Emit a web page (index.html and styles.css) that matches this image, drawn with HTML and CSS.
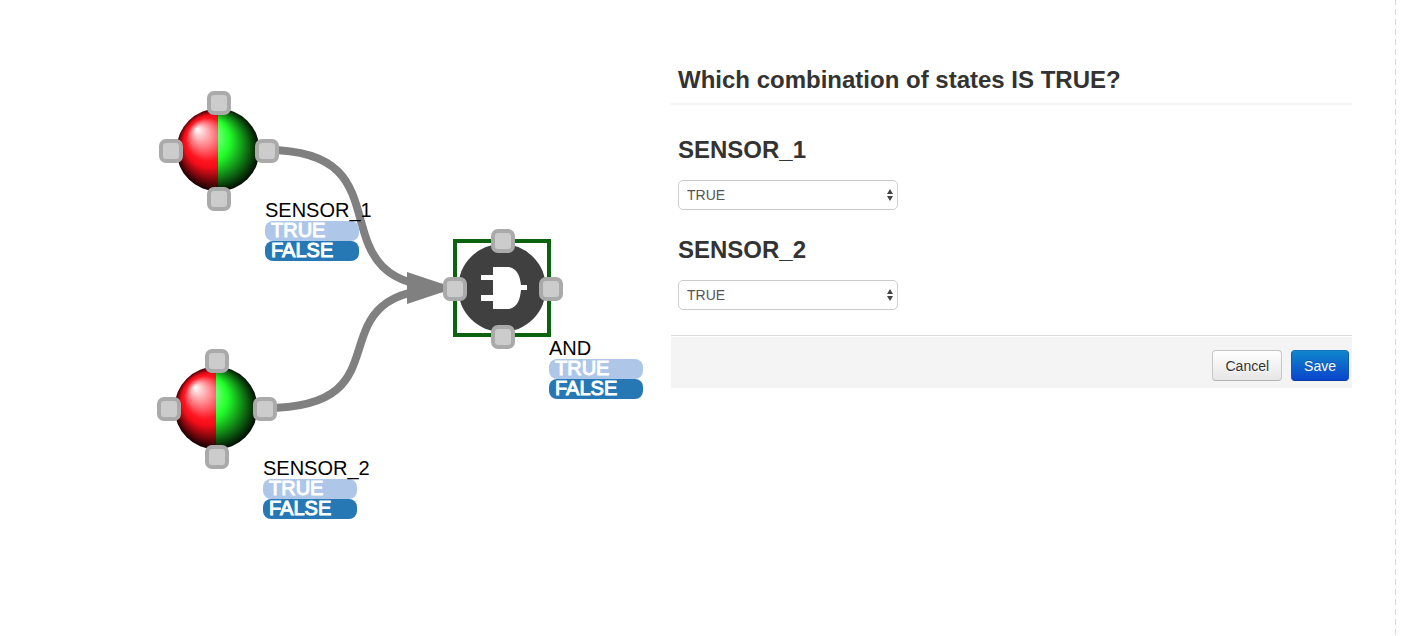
FILE: index.html
```html
<!DOCTYPE html>
<html lang="en">
<head>
<meta charset="utf-8">
<title>Logic gate states</title>
<link rel="stylesheet" href="styles.css">
</head>
<body>
<div class="page">
  <svg class="diagram" width="671" height="560" viewBox="0 0 671 560" role="img" aria-label="Two sensors feeding an AND gate">
    <defs>
      <radialGradient id="red-ball" gradientUnits="userSpaceOnUse" cx="0" cy="0" r="43" fx="-21" fy="-21">
        <stop offset="0" stop-color="#fff"/>
        <stop offset="0.5" stop-color="#ff1420"/>
        <stop offset="0.6" stop-color="#f30d18"/>
        <stop offset="1" stop-color="#000"/>
      </radialGradient>
      <radialGradient id="green-ball" gradientUnits="userSpaceOnUse" cx="0" cy="0" r="43" fx="-21" fy="-21">
        <stop offset="0" stop-color="#fff"/>
        <stop offset="0.5" stop-color="#24ff2c"/>
        <stop offset="0.54" stop-color="#20f028"/>
        <stop offset="1" stop-color="#000"/>
      </radialGradient>
      <rect id="port" class="port" x="-10" y="-10" width="20" height="20" rx="5"/>
      <g id="sensor">
        <path d="M0-41.500A41.500 41.500 0 0 0 0 41.500Z" fill="url(#red-ball)"/>
        <path d="M0-41.500A41.500 41.500 0 0 1 0 41.500Z" fill="url(#green-ball)"/>
        <use href="#port" x="1" y="-47"/>
        <use href="#port" x="-47" y="1"/>
        <use href="#port" x="49" y="1"/>
        <use href="#port" x="1" y="49"/>
      </g>
      <g id="states">
        <rect class="state-true" y="4" width="94" height="20" rx="8"/>
        <rect class="state-false" y="24" width="94" height="20" rx="8"/>
        <text class="state-text" x="6" y="20">TRUE</text>
        <text class="state-text" x="6" y="40">FALSE</text>
      </g>
    </defs>

    <path class="link" d="M267 150C416 150 305 288 453 288"/>
    <path class="link" d="M265 408C416 408 303 288 453 288"/>
    <path class="arrow" d="M407 272L455 288L407 304Z"/>

    <use href="#sensor" x="218" y="150"/>
    <use href="#sensor" x="216" y="408"/>

    <g>
      <rect class="selection" x="455" y="241" width="94" height="94"/>
      <circle class="gate" cx="502" cy="288" r="44"/>
      <path class="gate-glyph" d="M493 267H509C518 269 520 277 521 285H527V290H521C520 299 518 307 509 309H493V301H481V295H493V280H481V275H493Z"/>
      <use href="#port" x="503" y="241"/>
      <use href="#port" x="455" y="289"/>
      <use href="#port" x="551" y="289"/>
      <use href="#port" x="503" y="337"/>
    </g>

    <use href="#states" x="265" y="217"/>
    <text class="node-name" x="265" y="217">SENSOR_1</text>
    <use href="#states" x="263" y="475"/>
    <text class="node-name" x="263" y="475">SENSOR_2</text>
    <use href="#states" x="549" y="355"/>
    <text class="node-name" x="549" y="355">AND</text>
  </svg>

  <form class="panel">
    <h1 class="title">Which combination of states IS TRUE?</h1>
    <div class="fields">
      <div class="field">
        <label class="field-name" for="s1">SENSOR_1</label>
        <div class="select-box">
          <select id="s1" class="select"><option>TRUE</option><option>FALSE</option></select>
          <svg class="caret" width="6" height="12" viewBox="0 0 6 12" aria-hidden="true"><path d="M3 0L6 5H0ZM3 12L0 7H6Z"/></svg>
        </div>
      </div>
      <div class="field">
        <label class="field-name" for="s2">SENSOR_2</label>
        <div class="select-box">
          <select id="s2" class="select"><option>TRUE</option><option>FALSE</option></select>
          <svg class="caret" width="6" height="12" viewBox="0 0 6 12" aria-hidden="true"><path d="M3 0L6 5H0ZM3 12L0 7H6Z"/></svg>
        </div>
      </div>
    </div>
    <div class="actions">
      <button type="button" class="btn">Cancel</button>
      <button type="button" class="btn btn-primary">Save</button>
    </div>
  </form>
  <div class="divider"></div>
</div>
</body>
</html>
```

FILE: styles.css
```css
* { box-sizing: border-box; }

body {
  margin: 0;
  background: #fff;
  color: #333;
  font-family: "Liberation Sans", Arial, sans-serif;
}

.page {
  display: flex;
  min-height: 100vh;
  padding-right: 6px;
}

.diagram { flex: none; }

.port { fill: #ccc; stroke: #aaa; stroke-width: 4; }
.link { fill: none; stroke: #808080; stroke-width: 8; }
.arrow { fill: #808080; }
.selection { fill: none; stroke: #0b630f; stroke-width: 4; }
.gate { fill: #404040; }
.gate-glyph { fill: #fff; }
.state-true { fill: #aec7e8; }
.state-false { fill: #2678b4; }
.state-text { fill: #fff; stroke: #fff; stroke-width: 1; font-size: 20px; }
.node-name { fill: #000; font-size: 20px; }

.panel {
  flex: 1;
  margin: 60px 43px 0 0;
}

.title {
  margin: 0;
  padding: 0 7px 3px;
  border-bottom: 2px solid #f3f3f3;
  font-size: 24px;
  line-height: 40px;
}

.fields {
  display: flex;
  flex-direction: column;
  gap: 20px;
  padding: 25px 7px;
}

.field-name {
  display: block;
  margin-bottom: 10px;
  font-size: 24px;
  font-weight: bold;
  line-height: 40px;
}

.select-box { position: relative; width: 220px; }

.select {
  display: block;
  width: 100%;
  height: 30px;
  padding: 0 8px;
  border: 1px solid #ccc;
  border-radius: 5px;
  background: #fff;
  color: #555;
  font: 14px "Liberation Sans", Arial, sans-serif;
  appearance: none;
}

.caret {
  position: absolute;
  top: 9px;
  right: 5px;
  fill: #444;
  pointer-events: none;
}

.actions {
  display: flex;
  justify-content: flex-end;
  gap: 9px;
  padding: 14px 3px 7px;
  border-top: 1px solid #ddd;
  background: #f4f4f4;
  box-shadow: inset 0 1px 0 #fff;
}

.btn {
  height: 31px;
  padding: 0 12px;
  border: 1px solid #c5c5c5;
  border-bottom-color: #b3b3b3;
  border-radius: 4px;
  background: linear-gradient(#fff, #e6e6e6);
  color: #333;
  font: 14px "Liberation Sans", Arial, sans-serif;
  text-shadow: 0 1px 1px rgba(255, 255, 255, 0.75);
}

.btn-primary {
  border-color: #1873bd #1057c0 #0c3fa5;
  background: linear-gradient(#0f87cc, #0a45cc);
  color: #fff;
  text-shadow: 0 -1px 0 rgba(0, 0, 0, 0.25);
}

.divider {
  width: 1px;
  background: repeating-linear-gradient(#d8d8d8 0 5px, #fff 5px 9px, #d8d8d8 9px 10px);
}
```
